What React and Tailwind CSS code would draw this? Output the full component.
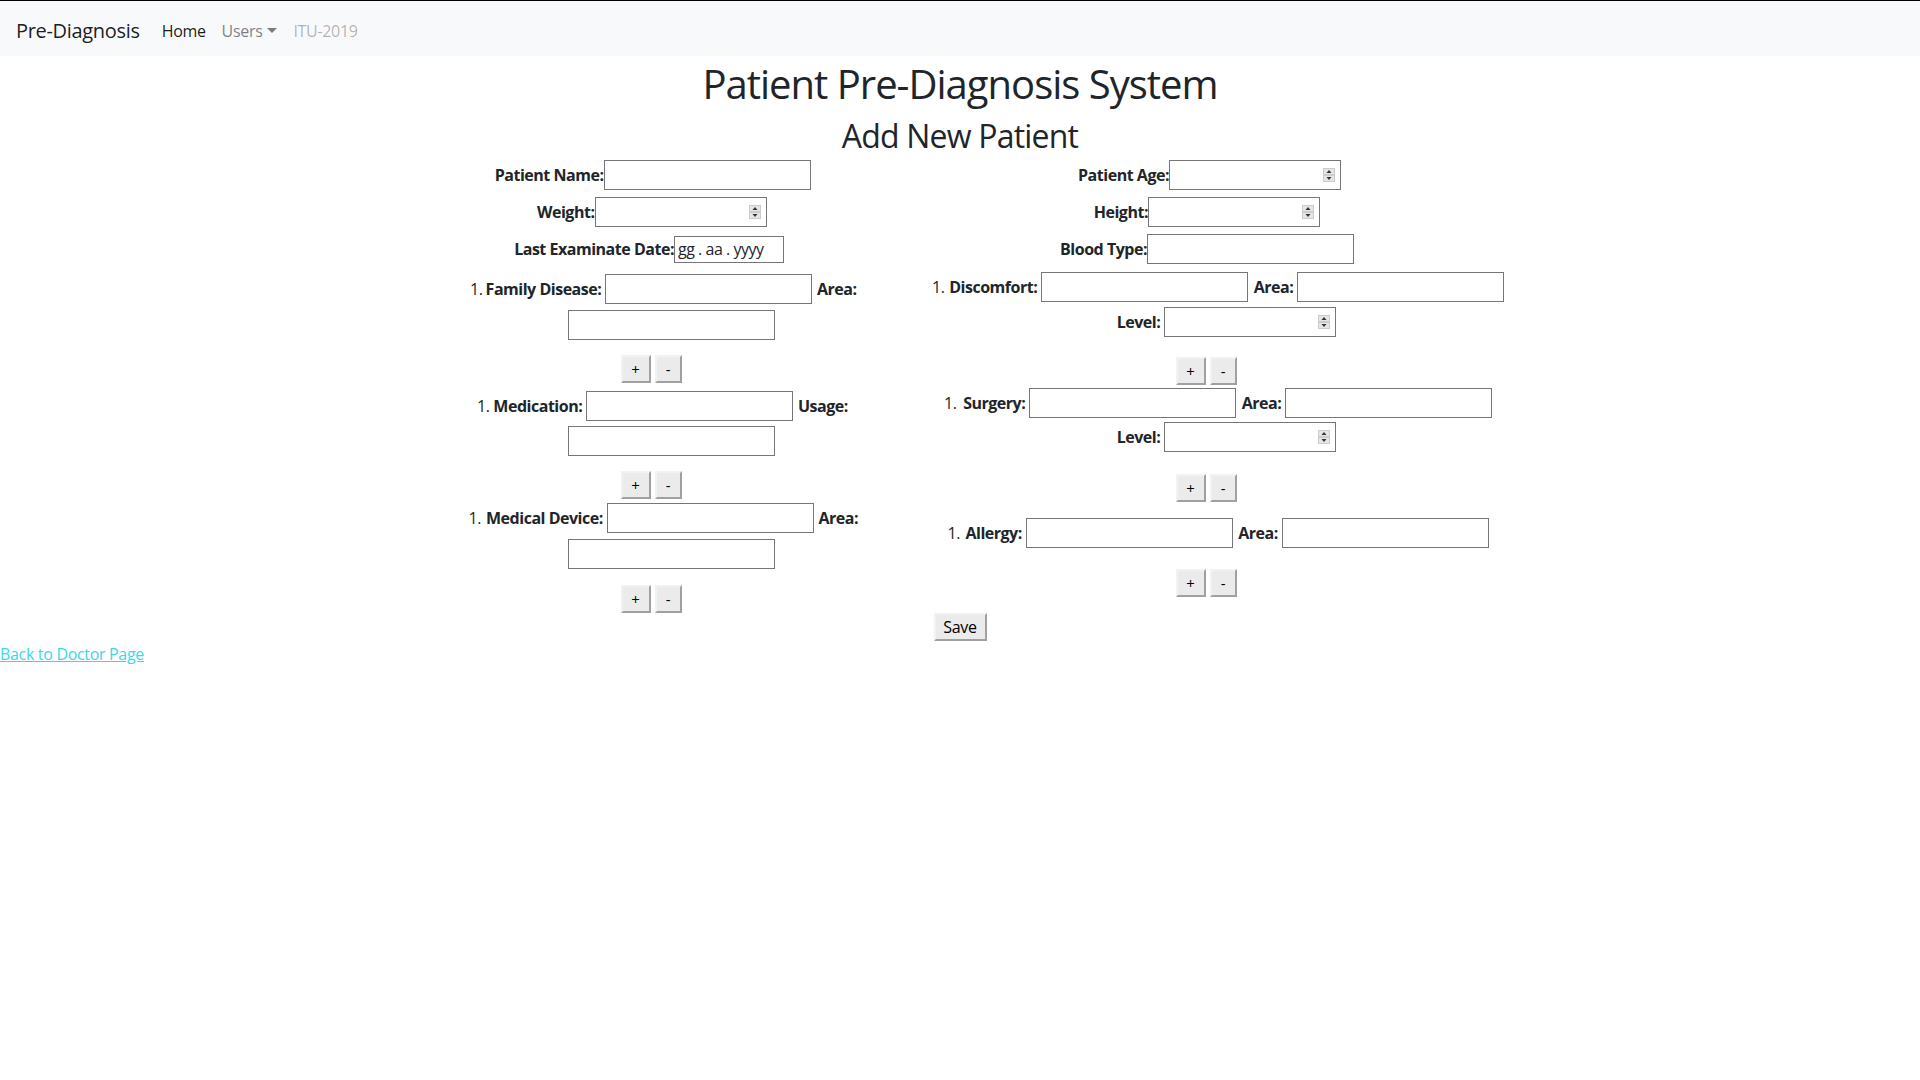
import React from "react";

function Spinner() {
  return (
    <svg
      width="12"
      height="14"
      viewBox="0 0 12 14"
      className="pointer-events-none absolute right-[5px] top-[7px]"
    >
      <rect x="0.5" y="0.5" width="11" height="6" fill="#e6e6e6" stroke="#cccccc" />
      <rect x="0.5" y="7.5" width="11" height="6" fill="#e6e6e6" stroke="#cccccc" />
      <path d="M3.5 5 L6 2 L8.5 5 Z" fill="#333333" />
      <path d="M3.5 9 L6 12 L8.5 9 Z" fill="#333333" />
    </svg>
  );
}

function TextBox() {
  return (
    <input
      type="text"
      className="h-[30px] w-[207px] shrink-0 border border-[#767676] bg-white px-[2px] outline-none"
    />
  );
}

function NumberBox() {
  return (
    <div className="relative h-[30px] w-[172px] shrink-0 border border-[#767676] bg-white">
      <input type="text" inputMode="numeric" className="h-full w-full px-[2px] outline-none" />
      <Spinner />
    </div>
  );
}

function DateBox() {
  return (
    <div className="flex h-[27px] w-[110px] shrink-0 items-center border border-[#767676] bg-white pl-[3px] font-normal tracking-[-0.03em]">
      gg . aa . yyyy
    </div>
  );
}

// label in front of an input: text sits flush right against it
function Label({ w, children }) {
  return (
    <span className={`flex shrink-0 justify-end whitespace-nowrap font-bold tracking-[-0.03em] ${w}`}>
      {children}
    </span>
  );
}

// label closing a line, a small gap after the input
function TailLabel({ w, children }) {
  return (
    <span className={`flex shrink-0 justify-start whitespace-nowrap pl-[5px] font-bold tracking-[-0.03em] ${w}`}>
      {children}
    </span>
  );
}

function Marker() {
  return <span className="-ml-[16px] w-[16px] shrink-0 font-normal">1.</span>;
}

function PlusMinus({ mt }) {
  return (
    <div className={`flex justify-center gap-[4px] ${mt}`}>
      <button className="h-[28px] w-[30px] border-2 border-b-[#a0a0a0] border-l-[#f2f2f2] border-r-[#a0a0a0] border-t-[#f2f2f2] bg-[#ebebeb] text-[15px] leading-none text-black">
        +
      </button>
      <button className="h-[28px] w-[27px] border-2 border-b-[#a0a0a0] border-l-[#f2f2f2] border-r-[#a0a0a0] border-t-[#f2f2f2] bg-[#ebebeb] text-[15px] leading-none text-black">
        -
      </button>
    </div>
  );
}

export default function App() {
  return (
    <div className="min-h-screen bg-white font-['Open_Sans',sans-serif] text-[16px] leading-6 tracking-[-0.02em] text-[#212529]">
      <nav className="flex h-[56px] items-center border-t border-black bg-[#f8f9fa] px-4 pt-[5px]">
        <a className="mr-[14px] py-[5px] text-[20px] leading-[30px] text-black/90">Pre-Diagnosis</a>
        <ul className="flex">
          <li className="px-2 text-black/90">Home</li>
          <li className="flex items-center px-2 text-black/50">
            Users
            <svg width="10" height="6" viewBox="0 0 10 6" className="ml-[5px]">
              <path d="M0 0 L10 0 L5 5 Z" fill="rgba(0,0,0,0.5)" />
            </svg>
          </li>
          <li className="px-2 text-black/30">ITU-2019</li>
        </ul>
      </nav>

      <h1 className="mt-[4px] text-center text-[40px] leading-[48px] font-normal tracking-[-0.025em]">
        Patient Pre-Diagnosis System
      </h1>
      <h2 className="mt-[9px] text-center text-[32px] leading-[38px] font-normal tracking-[-0.025em]">
        Add New Patient
      </h2>

      <div className="mt-[5px] flex justify-center">
        {/* left column */}
        <div className="flex w-[492px] flex-col">
          <div className="flex h-[30px] items-center justify-center">
            <Label w="w-[112px]">Patient Name:</Label>
            <TextBox />
          </div>
          <div className="mt-[7px] flex h-[30px] items-center justify-center">
            <Label w="w-[59px]">Weight:</Label>
            <NumberBox />
          </div>
          <div className="mt-[7px] flex h-[30px] items-center justify-center">
            <Label w="w-[156px]">Last Examinate Date:</Label>
            <DateBox />
          </div>

          <div className="mt-[10px] pl-[40px]">
            <div className="flex h-[30px] items-center justify-center">
              <Marker />
              <Label w="w-[119px]">Family Disease:&nbsp;</Label>
              <TextBox />
              <TailLabel w="w-[44px]">Area:</TailLabel>
            </div>
            <div className="mt-[6px] flex justify-center">
              <TextBox />
            </div>
          </div>
          <PlusMinus mt="mt-[15px]" />

          <div className="mt-[8px] pl-[40px]">
            <div className="flex h-[30px] items-center justify-center">
              <Marker />
              <Label w="w-[93px]">Medication:&nbsp;</Label>
              <TextBox />
              <TailLabel w="w-[56px]">Usage:</TailLabel>
            </div>
            <div className="mt-[5px] flex justify-center">
              <TextBox />
            </div>
          </div>
          <PlusMinus mt="mt-[15px]" />

          <div className="mt-[4px] pl-[40px]">
            <div className="flex h-[30px] items-center justify-center">
              <Marker />
              <Label w="w-[122px]">Medical Device:&nbsp;</Label>
              <TextBox />
              <TailLabel w="w-[44px]">Area:</TailLabel>
            </div>
            <div className="mt-[6px] flex justify-center">
              <TextBox />
            </div>
          </div>
          <PlusMinus mt="mt-[16px]" />
        </div>

        {/* right column */}
        <div className="flex w-[618px] flex-col">
          <div className="flex h-[30px] items-center justify-center">
            <Label w="w-[98px]">Patient Age:</Label>
            <NumberBox />
          </div>
          <div className="mt-[7px] flex h-[30px] items-center justify-center">
            <Label w="w-[56px]">Height:</Label>
            <NumberBox />
          </div>
          <div className="mt-[7px] flex h-[30px] items-center justify-center">
            <Label w="w-[89px]">Blood Type:</Label>
            <TextBox />
          </div>

          <div className="mt-[8px] pl-[40px]">
            <div className="flex h-[30px] items-center justify-center">
              <Marker />
              <Label w="w-[93px]">Discomfort:&nbsp;</Label>
              <TextBox />
              <Label w="w-[49px]">Area:&nbsp;</Label>
              <TextBox />
            </div>
            <div className="mt-[5px] flex h-[30px] items-center justify-center">
              <Label w="w-[48px]">Level:&nbsp;</Label>
              <NumberBox />
            </div>
          </div>
          <PlusMinus mt="mt-[20px]" />

          <div className="mt-[3px] pl-[40px]">
            <div className="flex h-[30px] items-center justify-center">
              <Marker />
              <Label w="w-[69px]">Surgery:&nbsp;</Label>
              <TextBox />
              <Label w="w-[49px]">Area:&nbsp;</Label>
              <TextBox />
            </div>
            <div className="mt-[4px] flex h-[30px] items-center justify-center">
              <Label w="w-[48px]">Level:&nbsp;</Label>
              <NumberBox />
            </div>
          </div>
          <PlusMinus mt="mt-[22px]" />

          <div className="mt-[16px] pl-[40px]">
            <div className="flex h-[30px] items-center justify-center">
              <Marker />
              <Label w="w-[62px]">Allergy:&nbsp;</Label>
              <TextBox />
              <Label w="w-[49px]">Area:&nbsp;</Label>
              <TextBox />
            </div>
          </div>
          <PlusMinus mt="mt-[21px]" />
        </div>
      </div>

      <div className="flex justify-center">
        <button className="h-[28px] w-[53px] border-2 border-b-[#a0a0a0] border-l-[#f2f2f2] border-r-[#a0a0a0] border-t-[#f2f2f2] bg-[#ebebeb] text-[16px] leading-none text-black">
          Save
        </button>
      </div>
      <div className="mt-[1px]">
        <a className="text-[#3cd7ea] underline">Back to Doctor Page</a>
      </div>
    </div>
  );
}
